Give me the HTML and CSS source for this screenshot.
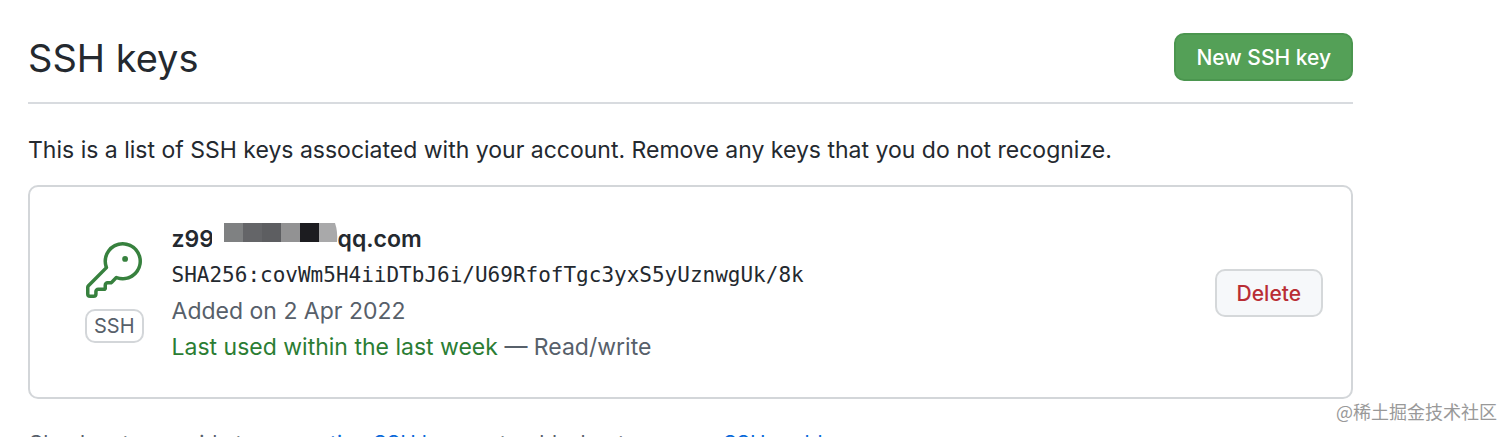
FILE: index.html
```html
<!DOCTYPE html>
<html lang="en">
<head>
  <meta charset="UTF-8">
  <meta name="viewport" content="width=device-width, initial-scale=1.0">
  <title>SSH keys</title>
  <link rel="stylesheet" href="styles.css">
</head>
<body>
  <main class="page">
    <header class="subhead">
      <h1>SSH keys</h1>
      <button type="button" class="btn btn-primary">New SSH key</button>
    </header>

    <p class="intro">This is a list of SSH keys associated with your account. Remove any keys that you do not recognize.</p>

    <ul class="key-list">
      <li class="key">
        <div class="key-type">
          <svg class="key-icon" viewBox="0 0 24 24" aria-hidden="true">
            <path d="M16.75 8.5a1.25 1.25 0 1 0 0-2.5 1.25 1.25 0 0 0 0 2.5Z"/>
            <path d="M15.75 0a8.25 8.25 0 1 1-2.541 16.101l-1.636 1.636a1.744 1.744 0 0 1-1.237.513H9.25a.25.25 0 0 0-.25.25v1.448a.876.876 0 0 1-.256.619l-.214.213a.75.75 0 0 1-.545.22H5.25a.25.25 0 0 0-.25.25v1A1.75 1.75 0 0 1 3.25 24h-1.5A1.75 1.75 0 0 1 0 22.25v-2.836c0-.464.185-.908.513-1.236l7.386-7.388A8.249 8.249 0 0 1 15.75 0ZM9 8.25a6.733 6.733 0 0 0 .463 2.462.75.75 0 0 1-.168.804l-7.722 7.721a.25.25 0 0 0-.073.177v2.836c0 .138.112.25.25.25h1.5a.25.25 0 0 0 .25-.25v-1c0-.966.784-1.75 1.75-1.75H7.5v-1c0-.966.784-1.75 1.75-1.75h1.086a.25.25 0 0 0 .177-.073l1.971-1.972a.75.75 0 0 1 .804-.168A6.75 6.75 0 1 0 9 8.25Z"/>
          </svg>
          <span class="label">SSH</span>
        </div>
        <div class="key-info">
          <strong class="key-title">
            <span class="cut">z99</span>
            <svg class="mosaic" viewBox="0 0 114 19" aria-hidden="true">
              <rect width="19" height="19" fill="#7f8182"/>
              <rect x="19" width="19" height="19" fill="#646568"/>
              <rect x="38" width="19" height="19" fill="#5d5e61"/>
              <rect x="57" width="19" height="19" fill="#929293"/>
              <rect x="76" width="19" height="19" fill="#1c1c20"/>
              <path d="M95 0h16q3 9 2 19H95Z" fill="#a9a9aa"/>
            </svg>
            <span>qq.com</span>
          </strong>
          <code>SHA256:covWm5H4iiDTbJ6i/U69RfofTgc3yxS5yUznwgUk/8k</code>
          <span class="muted">Added on 2 Apr 2022</span>
          <span class="muted"><span class="recent">Last used within the last week</span> — Read/write</span>
        </div>
        <button type="button" class="btn btn-danger">Delete</button>
      </li>
    </ul>

    <p class="help">Check out our guide to <a href="#">generating SSH keys</a> or troubleshoot <a href="#">common SSH problems</a>.</p>
  </main>
  <span class="watermark">@稀土掘金技术社区</span>
</body>
</html>
```
FILE: styles.css
```css
* { box-sizing: border-box; }
html, body { height: 100%; }
body { margin: 0; overflow: hidden; background: #fff; color: #24292f; font: 24px/36px Inter, sans-serif; }
a { color: #0969da; text-decoration: none; }

.page { padding: 32px 159px 0 28px; }
.subhead { display: flex; align-items: center; justify-content: space-between; padding-bottom: 20px; border-bottom: 2px solid #d8dbdf; }
.subhead h1 { margin: 0; padding-top: 2px; font-size: 38px; font-weight: 400; line-height: 48px; }

.btn { height: 48px; padding: 2px 20px 0; border: 2px solid #d5d8da; border-radius: 10px; font: 500 21px/28px Inter, sans-serif; cursor: pointer; }
.btn-primary { background: #54a057; border-color: #4b964f; color: #fff; }
.btn-danger { background: #f6f8fa; color: #b92d34; }

.intro { margin: 28px 0 17px; font-size: 23px; }

.key-list { margin: 0; padding: 0; list-style: none; border: 2px solid #d3d6d9; border-radius: 10px; }
.key { display: flex; align-items: center; padding: 34px 28px 32px; }
.key-type { display: flex; flex-direction: column; align-items: center; gap: 11px; margin: 0 28px 2px 27px; }
.key-icon { width: 56px; height: 56px; fill: #37813e; }
.label { padding: 0 7px; border: 2px solid #d3d6d9; border-radius: 10px; color: #57606a; font-size: 20px; line-height: 30px; }
.key-info { flex: 1; display: flex; flex-direction: column; font-size: 23px; }
.key-title { display: flex; align-items: center; font-weight: 600; }
.cut { width: 40px; overflow: hidden; }
.mosaic { width: 114px; height: 19px; margin: 0 0 14px 12px; }
.key-info code { font: 21px/36px "DejaVu Sans Mono", monospace; }
.muted { color: #57606a; }
.recent { color: #2b7d33; }

.help { margin: 27px 0 0; color: #57606a; font-size: 21px; white-space: nowrap; }

.watermark { position: absolute; right: 15px; bottom: 12px; color: #999; font: 18px/28px "Noto Sans CJK SC", sans-serif; }
```
